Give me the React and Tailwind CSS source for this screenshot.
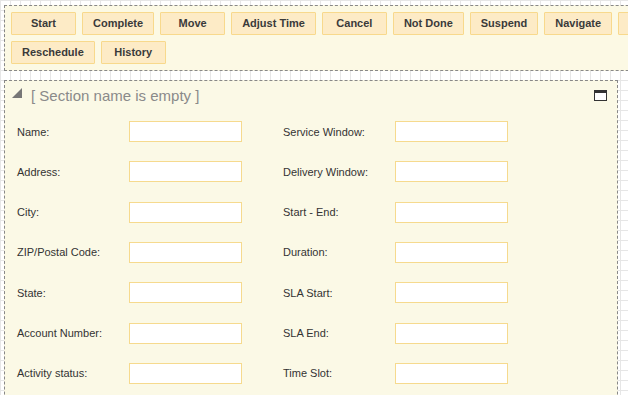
import React from "react";

const buttonsRow = ["Start", "Complete", "Move", "Adjust Time", "Cancel", "Not Done", "Suspend", "Navigate", "Reopen", "Reschedule", "History"];

const left = ["Name:", "Address:", "City:", "ZIP/Postal Code:", "State:", "Account Number:", "Activity status:"];
const right = ["Service Window:", "Delivery Window:", "Start - End:", "Duration:", "SLA Start:", "SLA End:", "Time Slot:"];

function Field({ label }) {
  return (
    <div className="flex items-center h-[21px]">
      <div className="w-[112px] text-[11px] text-[#333] leading-[14px] whitespace-nowrap">{label}</div>
      <div className="w-[113px] h-[21px] bg-white border border-[#f6da8e]" />
    </div>
  );
}

export default function App() {
  return (
    <div
      className="w-[628px] h-[395px] overflow-hidden bg-white bg-[linear-gradient(to_right,#e6e6e6_1px,transparent_1px),linear-gradient(to_bottom,#e6e6e6_1px,transparent_1px)] bg-[size:10px_10px]"
      style={{ fontFamily: '"Liberation Sans", Arial, sans-serif' }}
    >
      <div className="pt-[5px] pl-[4px]">
        <div className="w-[740px] border border-dashed border-[#888] bg-[#fcf9e4] pt-[6px] pb-[6px] pl-[6px] flex flex-wrap gap-[6px]">
          {buttonsRow.map((b) => (
            <div
              key={b}
              className="h-[23px] min-w-[65px] px-[10px] border border-[#f8d98c] bg-[#fdebc6] rounded-[1px] flex items-center justify-center text-[11px] font-bold text-[#3a3a3a] whitespace-nowrap"
            >
              {b}
            </div>
          ))}
        </div>
      </div>
      <div className="pl-[4px] mt-[9px]">
        <div className="w-[614px] h-[400px] border border-dashed border-[#888] bg-[#fbf9e6]">
          <div className="flex items-start justify-between pt-[6px] pl-[7px] pr-[10px]">
            <div className="flex items-start">
              <svg width="10" height="10" viewBox="0 0 10 10" className="mt-[1px]">
                <polygon points="10,0 10,10 0,10" fill="#777" />
              </svg>
              <span className="ml-[9px] text-[15px] leading-[18px] text-[#8a8a8a]">[ Section name is empty ]</span>
            </div>
            <div className="mt-[3px] w-[13px] h-[11px] border border-[#333] border-t-[3px] bg-white" />
          </div>
          <div className="mt-[16px] pl-[12px] grid grid-cols-[266px_266px] gap-y-[19.33px]">
            {left.map((l, i) => (
              <React.Fragment key={l}>
                <Field label={l} />
                <Field label={right[i]} />
              </React.Fragment>
            ))}
          </div>
        </div>
      </div>
    </div>
  );
}
